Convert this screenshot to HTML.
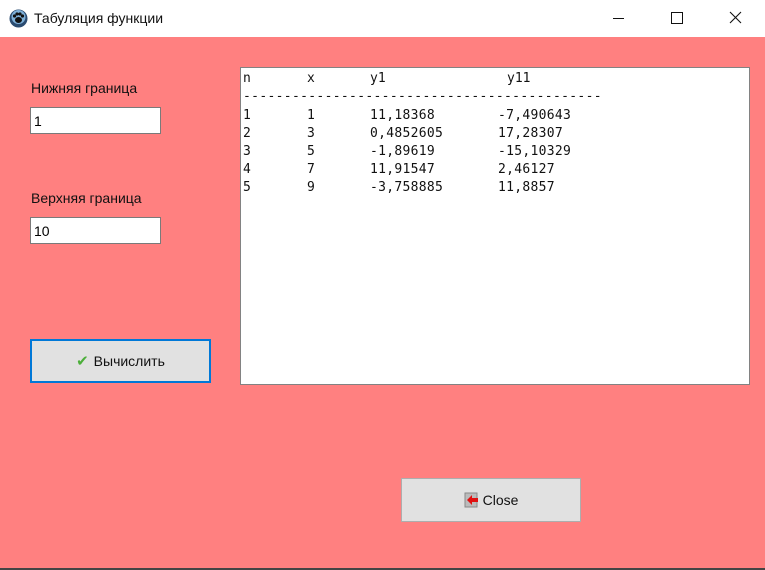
<!DOCTYPE html><html><head><style>
body{margin:0;width:765px;height:570px;overflow:hidden;font-family:"Liberation Sans","DejaVu Sans",sans-serif;background:#fff;position:relative}
.t{position:absolute;left:0;top:0;width:765px;height:37px;background:#fff}
.c{position:absolute;left:0;top:37px;width:765px;height:531px;background:#ff8080}
.a{position:absolute}
.lbl{font-size:14px;color:#111}
.inp{position:absolute;background:#fff;border:1px solid #7a7a7a;box-sizing:border-box;font-size:14px;padding:5px 0 0 3px}
.m{position:absolute;font-family:"DejaVu Sans Mono","Liberation Mono",monospace;font-size:13px;color:#111;white-space:pre}
.btn{position:absolute;background:#e1e1e1;box-sizing:border-box;font-size:14px;color:#111;display:flex;align-items:center;justify-content:center}
</style></head><body>
<div class="t"></div>
<svg class="a" style="left:9px;top:9px" width="19" height="19"><circle cx="9.5" cy="9.5" r="9" fill="#2a4b70"/><circle cx="9.5" cy="8" r="7" fill="#7fb1d9"/><ellipse cx="9.5" cy="11" rx="3.5" ry="3" fill="#111"/><circle cx="5.5" cy="7" r="1.6" fill="#111"/><circle cx="8" cy="5" r="1.6" fill="#111"/><circle cx="11" cy="5" r="1.6" fill="#111"/><circle cx="13.5" cy="7" r="1.6" fill="#111"/></svg>
<div class="a" style="left:34px;top:10px;font-size:14px;color:#111">Табуляция функции</div>
<div class="a" style="left:613px;top:18px;width:11px;height:1px;background:#111"></div>
<div class="a" style="left:671px;top:12px;width:10px;height:10px;border:1px solid #111"></div>
<svg class="a" style="left:729px;top:11px" width="13" height="13"><path d="M1 1L12 12M12 1L1 12" stroke="#111" stroke-width="1.1"/></svg>
<div class="c"></div>
<div class="a lbl" style="left:31px;top:80px">Нижняя граница</div>
<div class="inp" style="left:30px;top:107px;width:131px;height:27px">1</div>
<div class="a lbl" style="left:31px;top:190px">Верхняя граница</div>
<div class="inp" style="left:30px;top:217px;width:131px;height:27px">10</div>
<div class="btn" style="left:30px;top:339px;width:181px;height:44px;border:2px solid #0078d7"><span style="color:#4caf3a;margin-right:5px;font-size:15px">✔</span>Вычислить</div>
<div class="a" style="left:240px;top:67px;width:510px;height:318px;background:#fff;border:1px solid #828282;box-sizing:border-box"></div>
<div class="m" style="left:243px;top:71px">n</div><div class="m" style="left:307px;top:71px">x</div><div class="m" style="left:370px;top:71px">y1</div><div class="m" style="left:507px;top:71px">y11</div>
<div class="m" style="left:243px;top:89px;letter-spacing:0.33px">--------------------------------------------</div>
<div class="m" style="left:243px;top:107px;line-height:18px">1
2
3
4
5</div>
<div class="m" style="left:307px;top:107px;line-height:18px">1
3
5
7
9</div>
<div class="m" style="left:370px;top:107px;line-height:18px;letter-spacing:0.3px">11,18368
0,4852605
-1,89619
11,91547
-3,758885</div>
<div class="m" style="left:498px;top:107px;line-height:18px;letter-spacing:0.3px">-7,490643
17,28307
-15,10329
2,46127
11,8857</div>
<div class="btn" style="left:401px;top:478px;width:180px;height:44px;border:1px solid #adadad"><svg width="16" height="16" style="margin-right:3px"><rect x="1" y="1" width="12" height="14" fill="#bbb" stroke="#888"/><path d="M3 8L8 3V6H14V10H8V13Z" fill="#e01010"/></svg>Close</div>
<div class="a" style="left:0;top:568px;width:765px;height:2px;background:#444"></div>
</body></html>
